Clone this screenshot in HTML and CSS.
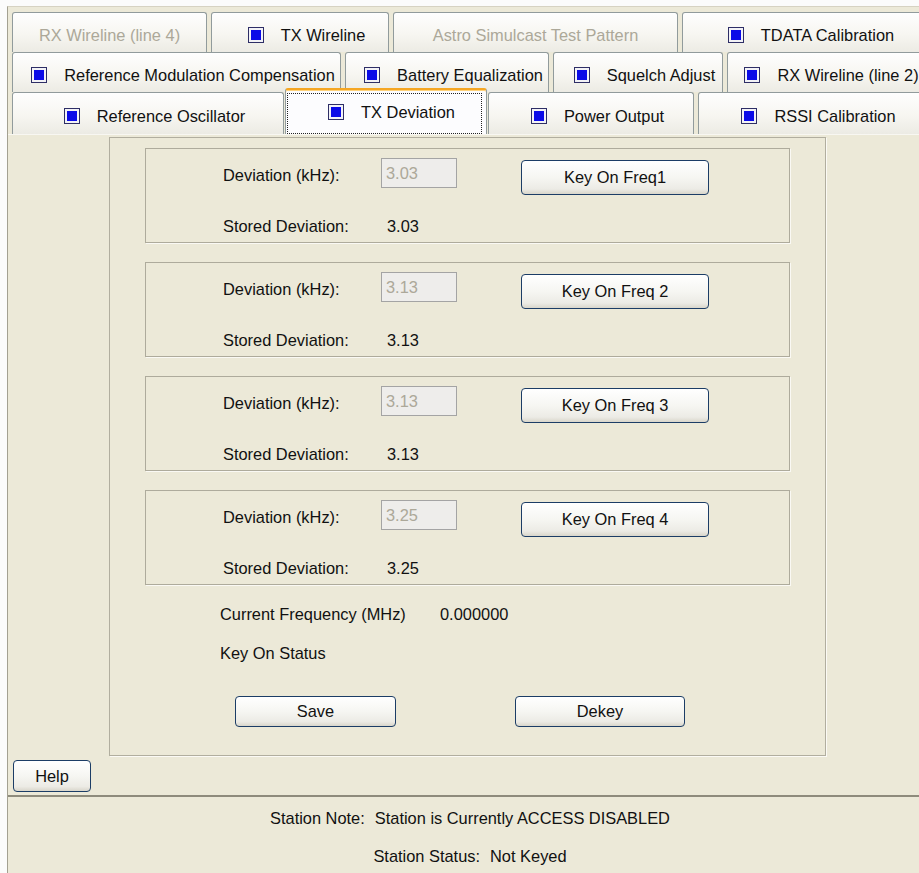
FILE: index.html
```html
<!DOCTYPE html>
<html>
<head>
<meta charset="utf-8">
<link rel="stylesheet" href="styles.css">
</head>
<body>
<div class="window">
  <div class="tabs">
    <div class="tabrow r1">
      <div class="tab disabled">RX Wireline (line 4)</div>
      <div class="tab icon"><span class="ico"></span>TX Wireline</div>
      <div class="tab disabled">Astro Simulcast Test Pattern</div>
      <div class="tab icon"><span class="ico"></span>TDATA Calibration</div>
    </div>
    <div class="tabrow r2">
      <div class="tab icon"><span class="ico"></span>Reference Modulation Compensation</div>
      <div class="tab icon"><span class="ico"></span>Battery Equalization</div>
      <div class="tab icon"><span class="ico"></span>Squelch Adjust</div>
      <div class="tab icon"><span class="ico"></span>RX Wireline (line 2)</div>
    </div>
    <div class="tabrow r3">
      <div class="tab icon"><span class="ico"></span>Reference Oscillator</div>
      <div class="tab selected"><div class="focus"><span class="ico"></span>TX Deviation</div></div>
      <div class="tab icon"><span class="ico"></span>Power Output</div>
      <div class="tab icon"><span class="ico"></span>RSSI Calibration</div>
    </div>
  </div>

  <div class="content">
    <div class="panel">
      <div class="group">
        <div class="grow1">
          <span class="lbl">Deviation (kHz):</span>
          <span class="field">3.03</span>
          <button class="btn key">Key On Freq1</button>
        </div>
        <div class="grow2"><span class="lbl2">Stored Deviation:</span><span>3.03</span></div>
      </div>
      <div class="group">
        <div class="grow1">
          <span class="lbl">Deviation (kHz):</span>
          <span class="field">3.13</span>
          <button class="btn key">Key On Freq 2</button>
        </div>
        <div class="grow2"><span class="lbl2">Stored Deviation:</span><span>3.13</span></div>
      </div>
      <div class="group">
        <div class="grow1">
          <span class="lbl">Deviation (kHz):</span>
          <span class="field">3.13</span>
          <button class="btn key">Key On Freq 3</button>
        </div>
        <div class="grow2"><span class="lbl2">Stored Deviation:</span><span>3.13</span></div>
      </div>
      <div class="group">
        <div class="grow1">
          <span class="lbl">Deviation (kHz):</span>
          <span class="field">3.25</span>
          <button class="btn key">Key On Freq 4</button>
        </div>
        <div class="grow2"><span class="lbl2">Stored Deviation:</span><span>3.25</span></div>
      </div>

      <div class="info first"><span class="ilbl">Current Frequency (MHz)</span><span>0.000000</span></div>
      <div class="info second"><span>Key On Status</span></div>

      <div class="actions">
        <button class="btn save">Save</button>
        <button class="btn dekey">Dekey</button>
      </div>
    </div>
    <div class="helprow"><button class="btn help">Help</button></div>
  </div>

  <div class="status">
    <div class="sline one"><span>Station Note:</span><span class="sval">Station is Currently ACCESS DISABLED</span></div>
    <div class="sline two"><span>Station Status:</span><span class="sval">Not Keyed</span></div>
  </div>
</div>
</body>
</html>
```

FILE: styles.css
```css
html, body {
  margin: 0;
  padding: 0;
  background: #fbfbfb;
  overflow: hidden;
}
body {
  font-family: "Liberation Sans", Arial, sans-serif;
  font-size: 16.4px;
  color: #111;
}
.window {
  margin: 6px 0 0 7px;
  width: 925px;
  height: 900px;
  background: #ece9d8;
  border-left: 1px solid #a3a091;
  border-top: 1px solid #d6d2c2;
  overflow: hidden;
}
.tabs {
  padding: 5px 0 0 4px;
}
.tabrow {
  display: flex;
  align-items: flex-end;
  white-space: nowrap;
}
.r1, .r2 { height: 40px; }
.r3 { height: 42px; }
.tab {
  flex-shrink: 0;
  box-sizing: border-box;
  height: 100%;
  display: flex;
  align-items: center;
  justify-content: center;
  padding-top: 5px;
  margin-right: 4px;
  border: 1px solid #919b9c;
  border-bottom: none;
  border-radius: 3px 3px 0 0;
  background: linear-gradient(#fefefe, #f7f6f1 55%, #ecebe4);
  color: #111;
}
.tab.icon { padding-left: 13px; }
.tab.disabled { color: #aca899; }
.ico {
  display: inline-block;
  box-sizing: border-box;
  width: 16px;
  height: 16px;
  margin-right: 17px;
  border: 1px solid #2e2e66;
  background: #0a0ae8;
  box-shadow: inset 0 0 0 2px #f2f2f6;
  flex-shrink: 0;
}
.r1 .tab:nth-child(1) { width: 195px; }
.r1 .tab:nth-child(2) { width: 178px; }
.r1 .tab:nth-child(3) { width: 285px; }
.r1 .tab:nth-child(4) { width: 245px; }
.r2 .tab:nth-child(1) { width: 329px; }
.r2 .tab:nth-child(2) { width: 204px; }
.r2 .tab:nth-child(3) { width: 170px; }
.r2 .tab:nth-child(4) { width: 196px; }
.r3 .tab:nth-child(1) { width: 272px; margin-right: 1px; }
.r3 .tab:nth-child(2) { width: 202px; margin-right: 1px; }
.r3 .tab:nth-child(3) { width: 206px; }
.r3 .tab:nth-child(4) { width: 228px; }

.tab.selected {
  height: 46px;
  padding: 0;
  align-items: stretch;
  background: #fcfcfe;
  border-top: 2px solid #f5a623;
  box-shadow: inset 0 1px 0 #ffd27a;
  position: relative;
  z-index: 2;
}
.focus {
  flex: 1;
  margin: 3px 4px 0 1px;
  border: 1px dotted #222;
  display: flex;
  align-items: center;
  justify-content: center;
  padding-left: 14px;
  padding-bottom: 3px;
}

.content {
  height: 661px;
  border-top: 1px solid #f8f7f2;
  box-sizing: border-box;
}
.panel {
  box-sizing: border-box;
  width: 717px;
  height: 619px;
  margin: 2px 0 0 101px;
  border: 1px solid #b1ae9f;
  box-shadow: 1px 1px 0 #fbfaf5;
  padding-top: 10px;
}
.group {
  box-sizing: border-box;
  width: 645px;
  height: 95px;
  margin: 0 0 19px 35px;
  border: 1px solid #aeab9c;
  box-shadow: 1px 1px 0 #faf9f4;
  padding: 9px 0 0 77px;
}
.grow1 {
  display: flex;
  align-items: flex-start;
}
.lbl {
  width: 158px;
  line-height: 30px;
  padding-top: 2px;
}
.field {
  box-sizing: border-box;
  width: 76px;
  height: 30px;
  border: 1px solid #a4a4a4;
  background: #eeedeb;
  color: #aca899;
  line-height: 28px;
  padding-left: 4px;
}
.btn {
  box-sizing: border-box;
  font-family: "Liberation Sans", Arial, sans-serif;
  font-size: 16.4px;
  color: #111;
  border: 1px solid #1c3d66;
  border-radius: 4px;
  background: linear-gradient(#ffffff, #f6f6f2 50%, #ecebe5 85%, #d9d6cb);
  padding: 0;
  margin: 0;
}
.btn.key {
  width: 188px;
  height: 35px;
  margin: 2px 0 0 64px;
}
.grow2 {
  display: flex;
  margin-top: 21px;
  line-height: 20px;
}
.lbl2 { width: 164px; }

.info {
  display: flex;
  line-height: 20px;
  padding-left: 110px;
}
.info.first { margin-top: 2px; }
.info.second { margin-top: 19px; }
.ilbl { width: 220px; }

.actions {
  display: flex;
  margin-top: 33px;
  padding-left: 125px;
}
.btn.save { width: 161px; height: 31px; }
.btn.dekey { width: 170px; height: 31px; margin-left: 119px; }

.helprow {
  padding: 4px 0 0 5px;
}
.btn.help { width: 78px; height: 32px; }

.status {
  border-top: 2px solid #8e8b7c;
  padding-top: 11px;
  padding-right: 1px;
}
.sline {
  display: flex;
  justify-content: center;
  line-height: 20px;
}
.sline.two { margin-top: 18px; }
.sval { margin-left: 10px; }
```
